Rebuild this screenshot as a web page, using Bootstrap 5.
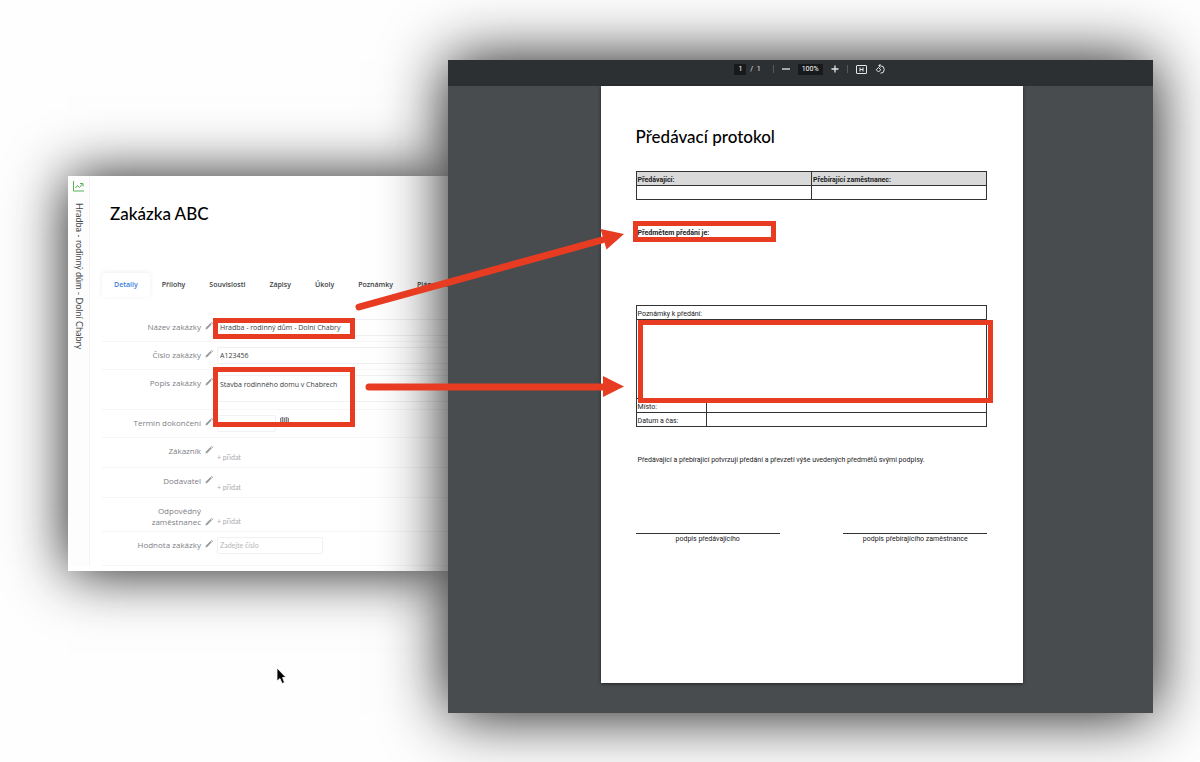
<!DOCTYPE html>
<html lang="cs">
<head>
<meta charset="utf-8">
<meta name="viewport" content="width=device-width, initial-scale=1">
<title>Zakázka ABC – Předávací protokol</title>
<link href="https://cdn.jsdelivr.net/npm/bootstrap@5.3.0/dist/css/bootstrap.min.css" rel="stylesheet">
<style>
  :root { --mark-red: #e83c22; }
  body { background: #fefefe; font-family: Lato, "Open Sans", sans-serif; }
  .stage { padding: 60px 47px 49px 68px; }

  /* order window */
  .order-window { flex: 380 1 0; min-width: 0; margin-top: 116px; background: #fff; padding-bottom: 5px;
    box-shadow: 0 1px 55px rgba(0,0,0,.9); }
  .order-main { min-width: 0; }
  .side-strip { width: 22px; flex: none; padding-top: 5px; background: #fdfdfd; border-right: 1px solid #f5f5f5; }
  .side-name { writing-mode: vertical-rl; font-size: 9px; line-height: 12px; color: #44474d; margin-top: 11px; }
  .heading { font-family: Lato, sans-serif; font-size: 17px; line-height: 24px; color: #000; }
  .order-title { padding: 26px 0 0 20px; }
  .order-tabs { margin: 47px 0 17px 12px; }
  .order-tabs .nav-link { font-family: "Open Sans", sans-serif; font-size: 7px; line-height: 10px; font-weight: 600; color: #3a3d42;
    padding: 7px 12px; border: 0; border-radius: 3px 3px 0 0; white-space: nowrap; }
  .order-tabs .nav-link.active { color: #3b7ddd; background: #fff; box-shadow: 0 -1px 5px rgba(0,0,0,.07); }
  .order-form { margin-left: 12px; }
  .field { border-bottom: 1px solid #f6f6f7; }
  .field-label { width: 99px; flex: none; font-family: "Open Sans", sans-serif; font-size: 8px; line-height: 11px; color: #7d8085; padding-top: 7px; }
  .pen { flex: none; width: 8px; height: 8px; margin: 0 4px 1px; }
  .field-body { padding-top: 5px; }
  .field .form-control { font-family: "Open Sans", sans-serif; font-size: 7px; line-height: 9px; min-height: 0; height: 17px; padding: 3px 2px; color: #3a3d42;
    border: 1px solid #f0f1f3; border-radius: 2px; background: #fff; resize: none; box-shadow: none; }
  .field .form-control::placeholder { color: #b4b6b9; font-family: Lato, sans-serif; }
  .field .wide { border-right: 0; border-radius: 2px 0 0 2px; }
  .field .date-box { width: 59px; }
  .field .number-box { width: 106px; }
  .field textarea.form-control { height: 27px; padding-top: 4px; }
  .add-link { font-size: 7px; line-height: 11px; color: #a8aaad; text-decoration: none; margin-top: 9px; display: inline-block; }
  .h-28 { min-height: 28px; } .h-30 { min-height: 30px; }
  .h-34 { min-height: 34px; } .h-40 { min-height: 40px; }

  /* document viewer */
  .viewer { flex: 705 1 0; z-index: 1; background: #484c4f; font-family: Roboto, "Open Sans", sans-serif;
    box-shadow: 0 1px 60px rgba(0,0,0,.95); }
  .viewer-bar { height: 26px; background: #2c3033; color: #e4e5e6; padding: 0 0 8px 18px; font-size: 7px; line-height: 10px; }
  .viewer-bar input { border: 0; padding: 0; height: 11px; background: #17191b; color: #fff; text-align: center; font-size: 7px; line-height: 11px; }
  .viewer-bar .page-box { width: 12px; }
  .viewer-bar .zoom-box { width: 25px; }
  .viewer-bar button { border: 0; padding: 0; background: none; color: inherit; line-height: 0; }
  .page-total { margin-right: 12px; }
  .bar-rule { width: 1px; height: 8px; background: #56595c; }
  .fit-button { margin-right: 8px; }
  .viewer-body { padding: 0 0 30px 23px; }
  .sheet { width: 62%; background: #fff; color: #202124; padding: 39px 36px 139px 35px; font-size: 7px; line-height: 10px;
    box-shadow: 0 1px 3px rgba(0,0,0,.5); }
  .sheet table { width: 100%; border-collapse: collapse; table-layout: fixed; }
  .sheet td, .sheet th { border: 1px solid #333; height: 14px; padding: 3px 1px 0; line-height: 10px; }
  .sheet th { background: #d9d9d9; }
  .parties { margin-top: 22px; }
  .subject { margin-top: 28px; padding-left: 2px; line-height: 10px; }
  .notes { margin-top: 67px; }
  .notes td.notes-area { height: 79px; }
  .notes-key { width: 20%; }
  .consent { margin-top: 28px; padding-left: 2px; }
  .signatures { margin-top: 68px; }
  .signature { border-top: 1px solid #333; line-height: 10px; }
  .signature-giver, .signature-taker { width: 41%; }

  /* annotations laid over the windows */
  .frame { position: absolute; border: 5px solid var(--mark-red); pointer-events: none; z-index: 2; }
  .frame-name { left: -4px; top: 4px; width: 142px; height: 21px; }
  .frame-desc { left: -4px; top: -3px; width: 142px; height: 60px; }
  .frame-subject { left: -3px; top: -7px; width: 143px; height: 21px; }
  .frame-notes { left: 2px; right: -6px; top: 15px; height: 83px; }
  .overlay { position: absolute; inset: 0; width: 100%; height: 100%; z-index: 3; pointer-events: none; }
</style>
</head>
<body>
<svg class="d-none" aria-hidden="true">
  <symbol id="pen" viewBox="0 0 16 16"><path d="M1 15l1-4L11 2l2.500 2.500L4.500 14z" fill="#96989c"/><path d="M12 1l1.500-1L16 2.500 14.500 4z" fill="#96989c"/></symbol>
</svg>
<main class="stage position-relative d-flex align-items-start overflow-hidden">
  <section class="order-window d-flex align-items-stretch">
    <aside class="side-strip d-flex flex-column align-items-center">
      <svg width="11" height="11" viewBox="0 0 22 22" fill="none" stroke="#55b35a" stroke-width="2"><path d="M1 0v20h21M5 14l4-5 4 4 6-7M14 5h6v6"/></svg>
      <div class="side-name text-nowrap">Hradba - rodinný dům - Dolní Chabry</div>
    </aside>
    <div class="order-main flex-fill overflow-hidden">
      <h1 class="heading order-title mb-0">Zakázka ABC</h1>
      <ul class="nav order-tabs flex-nowrap">
        <li class="nav-item"><a class="nav-link active" href="#">Detaily</a></li>
        <li class="nav-item"><a class="nav-link" href="#">Přílohy</a></li>
        <li class="nav-item"><a class="nav-link" href="#">Souvislosti</a></li>
        <li class="nav-item"><a class="nav-link" href="#">Zápisy</a></li>
        <li class="nav-item"><a class="nav-link" href="#">Úkoly</a></li>
        <li class="nav-item"><a class="nav-link" href="#">Poznámky</a></li>
        <li class="nav-item"><a class="nav-link" href="#">Plánování</a></li>
      </ul>
      <form class="order-form">
        <div class="field h-28 d-flex align-items-start">
          <label class="field-label text-end" for="f-name">Název zakázky</label><svg class="pen mt-2"><use href="#pen"/></svg>
          <div class="field-body flex-fill position-relative"><input class="form-control wide" id="f-name" value="Hradba - rodinný dům - Dolní Chabry"><span class="frame frame-name"></span></div>
        </div>
        <div class="field h-28 d-flex align-items-start">
          <label class="field-label text-end" for="f-no">Číslo zakázky</label><svg class="pen mt-2"><use href="#pen"/></svg>
          <div class="field-body flex-fill"><input class="form-control wide" id="f-no" value="A123456"></div>
        </div>
        <div class="field h-40 d-flex align-items-start">
          <label class="field-label text-end" for="f-desc">Popis zakázky</label><svg class="pen mt-2"><use href="#pen"/></svg>
          <div class="field-body flex-fill position-relative"><textarea class="form-control wide" id="f-desc">Stavba rodinného domu v Chabrech</textarea><span class="frame frame-desc"></span></div>
        </div>
        <div class="field h-28 d-flex align-items-start">
          <label class="field-label text-end" for="f-date">Termín dokončení</label><svg class="pen mt-2"><use href="#pen"/></svg>
          <div class="field-body flex-fill d-flex gap-1"><input class="form-control date-box" id="f-date">
            <svg width="9" height="10" viewBox="0 0 18 20" fill="none" stroke="#85888c" stroke-width="2"><path d="M1 6h16v13H1zM1 10h16M1 14h16M5 4v15M9 6v13M13 4v15"/></svg></div>
        </div>
        <div class="field h-30 d-flex align-items-start">
          <span class="field-label text-end">Zákazník</span><svg class="pen mt-2"><use href="#pen"/></svg>
          <div class="field-body flex-fill lh-1"><a class="add-link" href="#">+ přidat</a></div>
        </div>
        <div class="field h-30 d-flex align-items-start">
          <span class="field-label text-end">Dodavatel</span><svg class="pen mt-2"><use href="#pen"/></svg>
          <div class="field-body flex-fill lh-1"><a class="add-link" href="#">+ přidat</a></div>
        </div>
        <div class="field h-34 d-flex align-items-end pb-1">
          <span class="field-label text-end">Odpovědný<br>zaměstnanec</span><svg class="pen"><use href="#pen"/></svg>
          <div class="field-body flex-fill lh-1"><a class="add-link" href="#">+ přidat</a></div>
        </div>
        <div class="field h-34 d-flex align-items-start">
          <label class="field-label text-end" for="f-value">Hodnota zakázky</label><svg class="pen mt-2"><use href="#pen"/></svg>
          <div class="field-body"><input class="form-control number-box" id="f-value" placeholder="Zadejte číslo"></div>
        </div>
      </form>
    </div>
  </section>

  <section class="viewer position-relative">
    <div class="viewer-bar d-flex align-items-center justify-content-center">
      <input class="page-box me-1" value="1" aria-label="Strana"><span class="page-total">/&nbsp; 1</span>
      <span class="bar-rule me-2"></span>
      <button type="button" aria-label="Zmenšit"><svg width="8" height="8" viewBox="0 0 8 8"><path d="M0 4h8" stroke="currentColor" stroke-width="1.300"/></svg></button>
      <input class="zoom-box mx-2" value="100%" aria-label="Lupa">
      <button type="button" aria-label="Zvětšit"><svg width="8" height="8" viewBox="0 0 8 8"><path d="M.5 4h7M4 .5v7" stroke="currentColor" stroke-width="1.300"/></svg></button>
      <span class="bar-rule mx-2"></span>
      <button type="button" class="fit-button" aria-label="Přizpůsobit"><svg width="11" height="9" viewBox="0 0 22 18" fill="none" stroke="currentColor" stroke-width="2"><rect x="1" y="1" width="20" height="16" rx="1"/><path d="M8 5v8M14 5v8M8 9h6"/></svg></button>
      <button type="button" aria-label="Otočit"><svg width="10" height="10" viewBox="0 0 20 20" fill="none" stroke="currentColor" stroke-width="2"><path d="M11 18.500a7.500 7.500 0 0 0 0-15H8M11 0L7.500 3.500 11 7M7 7l-4.500 4.500L7 16l4.500-4.500z"/></svg></button>
    </div>
    <div class="viewer-body">
      <article class="sheet mx-auto">
        <h2 class="heading mb-0">Předávací protokol</h2>
        <table class="parties">
          <thead><tr><th scope="col">Předávající:</th><th scope="col">Přebírající zaměstnanec:</th></tr></thead>
          <tbody><tr><td></td><td></td></tr></tbody>
        </table>
        <div class="subject position-relative fw-bold">Předmětem předání je:<span class="frame frame-subject"></span></div>
        <div class="notes position-relative">
          <table>
            <colgroup><col class="notes-key"><col></colgroup>
            <tbody>
              <tr><td colspan="2">Poznámky k předání:</td></tr>
              <tr><td colspan="2" class="notes-area"></td></tr>
              <tr><td>Místo:</td><td></td></tr>
              <tr><td>Datum a čas:</td><td></td></tr>
            </tbody>
          </table>
          <span class="frame frame-notes"></span>
        </div>
        <p class="consent mb-0">Předávající a přebírající potvrzují předání a převzetí výše uvedených předmětů svými podpisy.</p>
        <div class="signatures d-flex justify-content-between text-center">
          <div class="signature signature-giver">podpis předávajícího</div>
          <div class="signature signature-taker">podpis přebírajícího zaměstnance</div>
        </div>
      </article>
    </div>
  </section>

  <svg class="overlay" viewBox="0 0 1200 762" preserveAspectRatio="none" aria-hidden="true">
    <g stroke="#e83c22" stroke-width="7" stroke-linecap="round"><path d="M359 307L602 240M369 387H604"/></g>
    <path d="M600.500 229L624 234l-17.500 15.500zM603 376l21 10.500L603 397z" fill="#e83c22"/>
    <path d="M277 668v13l3-2.500 2 5 2.500-1-2-5h3.500z" fill="#000" stroke="#fff" stroke-width=".8"/>
  </svg>
</main>
<script src="https://cdn.jsdelivr.net/npm/bootstrap@5.3.0/dist/js/bootstrap.bundle.min.js"></script>
</body>
</html>
